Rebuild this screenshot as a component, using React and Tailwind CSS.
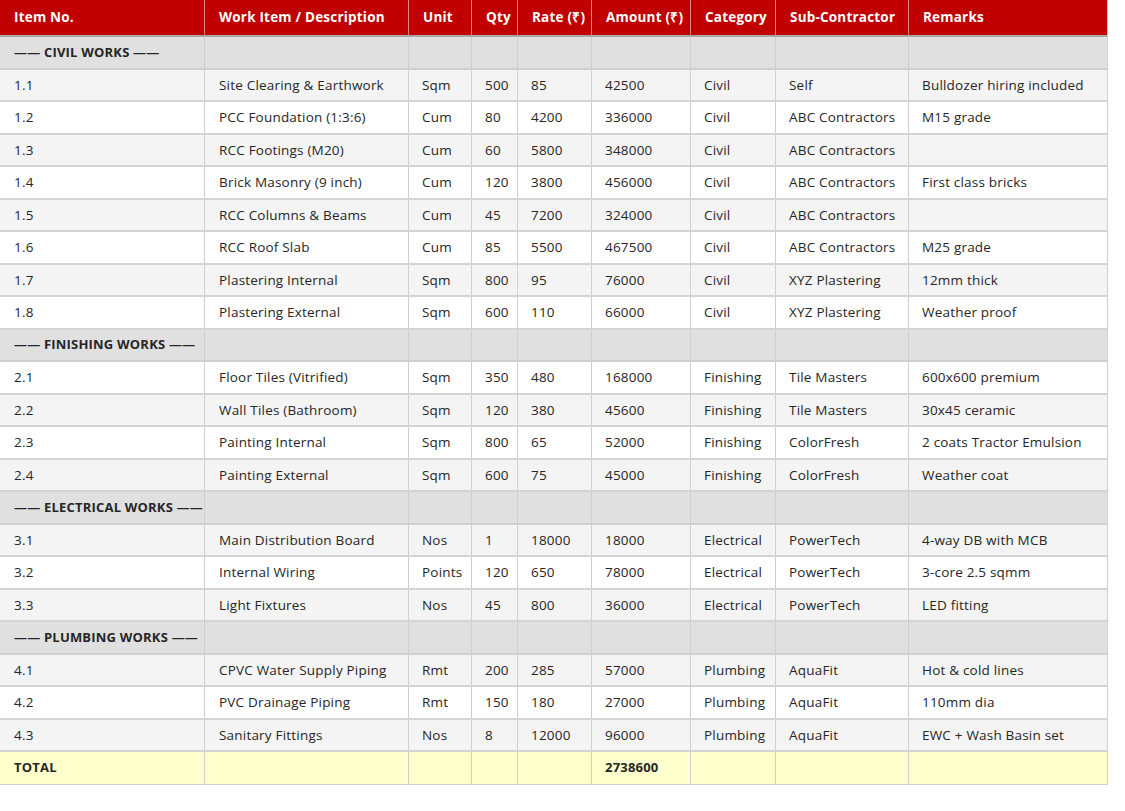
const cols = ["w-[205px]", "w-[204px]", "w-[63px]", "w-[46px]", "w-[74px]", "w-[99px]", "w-[85px]", "w-[133px]", "w-[199px]"];
const head = ["Item No.", "Work Item / Description", "Unit", "Qty", "Rate (₹)", "Amount (₹)", "Category", "Sub-Contractor", "Remarks"];

const rows = [
  ["h", "—— CIVIL WORKS ——"],
  ["1.1", "Site Clearing & Earthwork", "Sqm", "500", "85", "42500", "Civil", "Self", "Bulldozer hiring included"],
  ["1.2", "PCC Foundation (1:3:6)", "Cum", "80", "4200", "336000", "Civil", "ABC Contractors", "M15 grade"],
  ["1.3", "RCC Footings (M20)", "Cum", "60", "5800", "348000", "Civil", "ABC Contractors", ""],
  ["1.4", "Brick Masonry (9 inch)", "Cum", "120", "3800", "456000", "Civil", "ABC Contractors", "First class bricks"],
  ["1.5", "RCC Columns & Beams", "Cum", "45", "7200", "324000", "Civil", "ABC Contractors", ""],
  ["1.6", "RCC Roof Slab", "Cum", "85", "5500", "467500", "Civil", "ABC Contractors", "M25 grade"],
  ["1.7", "Plastering Internal", "Sqm", "800", "95", "76000", "Civil", "XYZ Plastering", "12mm thick"],
  ["1.8", "Plastering External", "Sqm", "600", "110", "66000", "Civil", "XYZ Plastering", "Weather proof"],
  ["h", "—— FINISHING WORKS ——"],
  ["2.1", "Floor Tiles (Vitrified)", "Sqm", "350", "480", "168000", "Finishing", "Tile Masters", "600x600 premium"],
  ["2.2", "Wall Tiles (Bathroom)", "Sqm", "120", "380", "45600", "Finishing", "Tile Masters", "30x45 ceramic"],
  ["2.3", "Painting Internal", "Sqm", "800", "65", "52000", "Finishing", "ColorFresh", "2 coats Tractor Emulsion"],
  ["2.4", "Painting External", "Sqm", "600", "75", "45000", "Finishing", "ColorFresh", "Weather coat"],
  ["h", "—— ELECTRICAL WORKS ——"],
  ["3.1", "Main Distribution Board", "Nos", "1", "18000", "18000", "Electrical", "PowerTech", "4-way DB with MCB"],
  ["3.2", "Internal Wiring", "Points", "120", "650", "78000", "Electrical", "PowerTech", "3-core 2.5 sqmm"],
  ["3.3", "Light Fixtures", "Nos", "45", "800", "36000", "Electrical", "PowerTech", "LED fitting"],
  ["h", "—— PLUMBING WORKS ——"],
  ["4.1", "CPVC Water Supply Piping", "Rmt", "200", "285", "57000", "Plumbing", "AquaFit", "Hot & cold lines"],
  ["4.2", "PVC Drainage Piping", "Rmt", "150", "180", "27000", "Plumbing", "AquaFit", "110mm dia"],
  ["4.3", "Sanitary Fittings", "Nos", "8", "12000", "96000", "Plumbing", "AquaFit", "EWC + Wash Basin set"],
];

const Cell = ({ i, children, bold }) => (
  <div className={`${cols[i]} shrink-0 h-full flex items-center border-r border-[#cfcfcf] last:border-r-0 ${i === 0 || i === 1 ? "pl-[14px]" : "pl-[13px]"} ${bold ? "font-bold" : ""} whitespace-nowrap overflow-hidden`}>
    {children}
  </div>
);

export default function App() {
  return (
    <div className="bg-white min-h-screen" style={{ fontFamily: '"Open Sans", "Liberation Sans", sans-serif' }}>
      <div className="w-[1108px] text-[13.5px] text-[#262626] tracking-[0.2px] border-b border-r border-[#cfcfcf]">
        <div className="flex h-[37px] bg-[#c00000] text-white font-bold text-[13.5px] border-b-2 border-[#a8a8a8]">
          {head.map((h, i) => (
            <div key={i} className={`${cols[i]} shrink-0 h-full flex items-center border-r border-[#d88] last:border-r-0 pl-[14px]`}>{h}</div>
          ))}
        </div>
        {rows.map((r, idx) => {
          const n = idx + 1;
          if (r[0] === "h") {
            return (
              <div key={idx} className="flex h-[32.5px] bg-[#e0e0e0] border-b-2 border-[#cfcfcf] font-bold text-[13px]">
                {cols.map((_, i) => <Cell key={i} i={i}>{i === 0 ? r[1] : ""}</Cell>)}
              </div>
            );
          }
          return (
            <div key={idx} className={`flex h-[32.5px] border-b-2 border-[#d4d4d4] ${n % 2 === 0 ? "bg-[#f4f4f4]" : "bg-white"}`}>
              {r.map((c, i) => <Cell key={i} i={i}>{c}</Cell>)}
            </div>
          );
        })}
        <div className="flex h-[32px] bg-[#ffffcc] font-bold text-[13px]">
          {cols.map((_, i) => <Cell key={i} i={i}>{i === 0 ? "TOTAL" : i === 5 ? "2738600" : ""}</Cell>)}
        </div>
      </div>
    </div>
  );
}
